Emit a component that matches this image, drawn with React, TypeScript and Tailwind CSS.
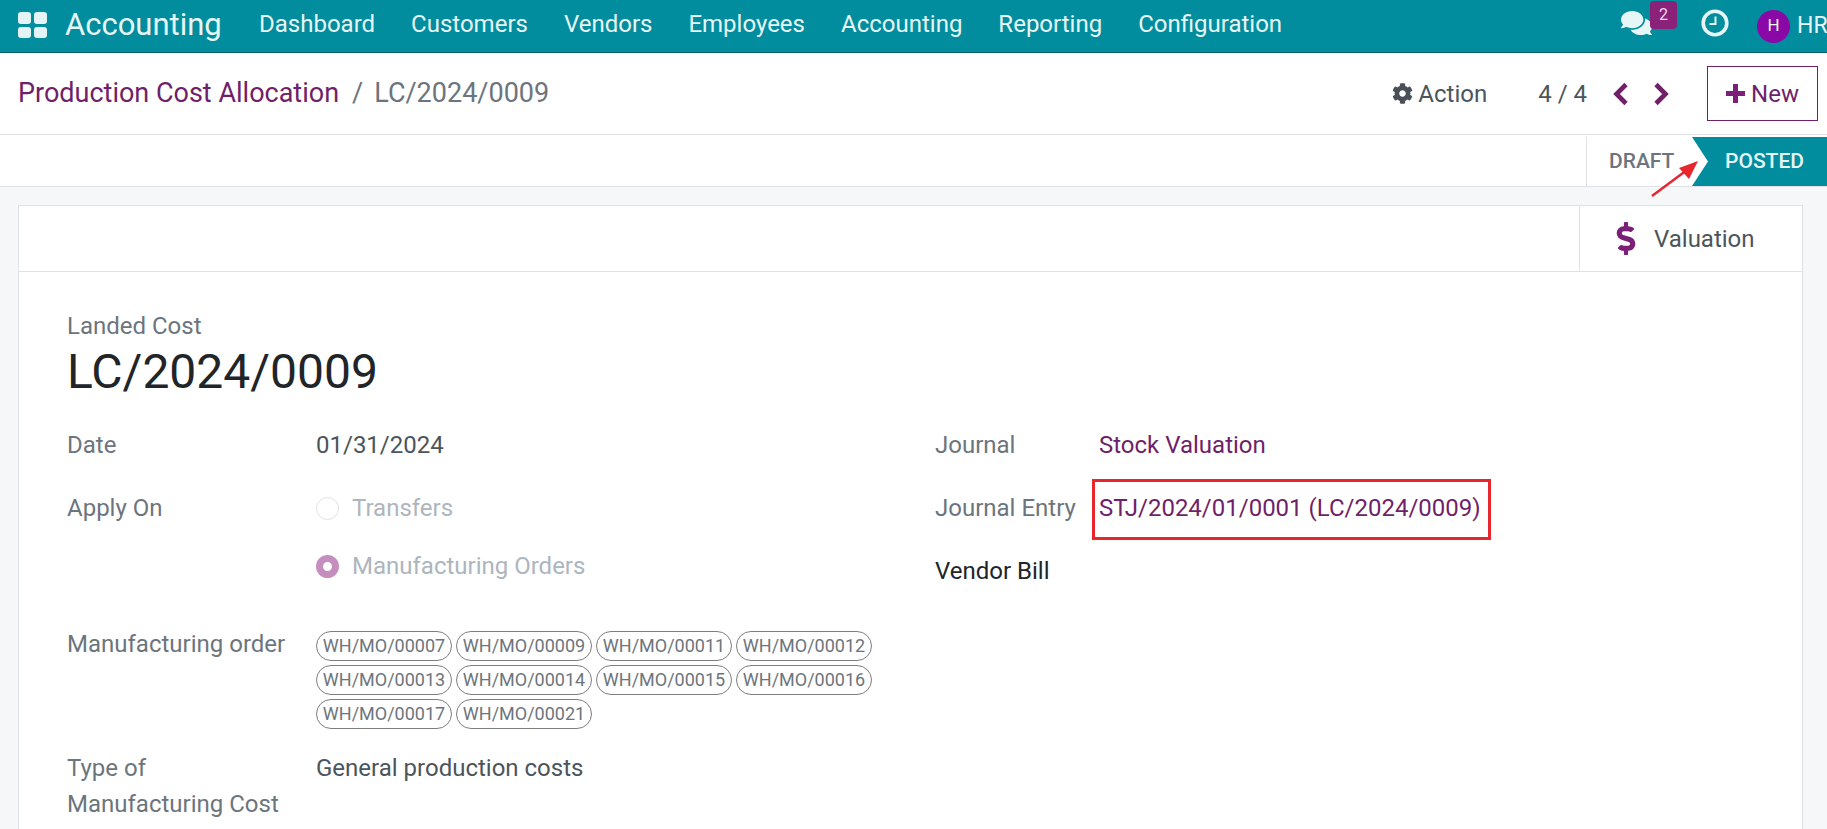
import { FaCog, FaDollarSign, FaComments } from "react-icons/fa";

const nav = ["Dashboard", "Customers", "Vendors", "Employees", "Accounting", "Reporting", "Configuration"];
const chips = [
  "WH/MO/00007", "WH/MO/00009", "WH/MO/00011", "WH/MO/00012",
  "WH/MO/00013", "WH/MO/00014", "WH/MO/00015", "WH/MO/00016",
  "WH/MO/00017", "WH/MO/00021",
];

export default function App() {
  return (
    <div className="relative w-[1827px] h-[829px] overflow-hidden bg-[#f6f7f9] font-['Roboto',sans-serif] text-[24px] text-[#4c555b]">
      {/* Top bar */}
      <header className="h-[53px] bg-[#018d9d] border-b border-[#0b5f69] flex items-center text-[#e6f5f6]">
        <div className="ml-[18px] mb-[2px] grid grid-cols-2 gap-[3px] w-[29px] h-[26px]">
          <span className="bg-[#e4f3f5] rounded-[3px]" />
          <span className="bg-[#e4f3f5] rounded-[3px]" />
          <span className="bg-[#e4f3f5] rounded-[3px]" />
          <span className="bg-[#e4f3f5] rounded-[3px]" />
        </div>
        <div className="ml-[18px] mb-[4px] w-[157px] text-[31px] leading-none">Accounting</div>
        <nav className="ml-[37px] mb-[5px] flex gap-[36px] text-[24px] leading-none">
          {nav.map((n) => (
            <span key={n}>{n}</span>
          ))}
        </nav>
        <div className="ml-auto flex items-center">
          <div className="relative w-[56px] h-[52px]">
            <FaComments className="absolute left-0 top-[8px] w-[31px] h-[30px]" />
            <span className="absolute left-[29px] top-[1px] w-[27px] h-[28px] rounded-[4px] bg-[#8a2279] text-[#f0d9ec] text-[16px] flex items-center justify-center">2</span>
          </div>
          <svg className="ml-[24px] mb-[6px] w-[28px] h-[28px]" viewBox="0 0 28 28" fill="none" stroke="currentColor">
            <circle cx="14" cy="14" r="11.8" strokeWidth="3.6" />
            <path d="M14.5 7.5V15H8.5" strokeWidth="2" />
          </svg>
          <span className="ml-[28px] w-[33px] h-[33px] rounded-full bg-[#8a08a6] text-[17px] flex items-center justify-center">H</span>
          <span className="ml-[7px] w-[30px] whitespace-nowrap text-[23px]">HR</span>
        </div>
      </header>

      {/* Control panel */}
      <div className="h-[82px] bg-white border-b border-[#dee2e6] flex items-center pl-[18px] pr-[9px]">
        <span className="text-[#701f69] text-[27px]">Production Cost Allocation</span>
        <span className="ml-[13px] text-[27px] text-[#6c757d]">/</span>
        <span className="ml-[11px] text-[27px] text-[#6c757d]">LC/2024/0009</span>
        <div className="ml-auto flex items-center">
          <FaCog className="w-[21px] h-[21px] text-[#495057]" />
          <span className="ml-[5px] mt-[1px] text-[24px]">Action</span>
          <span className="ml-[51px] mt-[1px] text-[24px]">4 / 4</span>
          <svg className="ml-[25px] w-[17px] h-[24px] text-[#701f69]" viewBox="0 0 17 24" fill="none" stroke="currentColor">
            <path d="M14 2.500 4.500 12l9.500 9.500" strokeWidth="4.600" />
          </svg>
          <svg className="ml-[24px] w-[17px] h-[24px] text-[#701f69]" viewBox="0 0 17 24" fill="none" stroke="currentColor">
            <path d="M3 2.500 12.500 12 3 21.500" strokeWidth="4.600" />
          </svg>
          <button className="ml-[37px] w-[111px] h-[55px] border border-[#701f69] flex items-center justify-center text-[#701f69] text-[24px]">
            <svg className="w-[19px] h-[19px] mr-[6px] text-[#7c1f78]" viewBox="0 0 19 19" fill="currentColor">
              <path d="M7 0h5v7h7v5h-7v7H7v-7H0V7h7z" />
            </svg>
            New
          </button>
        </div>
      </div>

      {/* Status bar */}
      <div className="h-[52px] bg-white border-b border-[#dee2e6] flex justify-end">
        <div className="flex mt-[2px] h-[49px]">
          <div className="w-[106px] border-l border-[#dee2e6] pl-[22px] flex items-center font-medium text-[21px] text-[#6c757d]">DRAFT</div>
          <div className="w-[135px] relative flex items-center justify-end pr-[23px] font-medium text-[21px] text-[#e6f5f6]">
            <svg className="absolute inset-0 w-full h-full" viewBox="0 0 135 49" preserveAspectRatio="none">
              <polygon points="0,0 135,0 135,49 0,49 16,24.5" fill="#018d9d" />
            </svg>
            <span className="relative">POSTED</span>
          </div>
        </div>
      </div>

      {/* Sheet */}
      <div className="mt-[18px] ml-[18px] mr-[24px] h-[700px] bg-white border border-[#dee2e6]">
        <div className="h-[66px] border-b border-[#dee2e6] flex justify-end">
          <div className="w-[223px] border-l border-[#dee2e6] flex items-center pl-[36px]">
            <FaDollarSign className="w-[20px] h-[33px] text-[#7c1f78]" />
            <span className="ml-[18px] mt-[1px] text-[24px]">Valuation</span>
          </div>
        </div>
        <div className="pl-[48px] pt-[38px]">
          <div className="text-[#6c757d] text-[24px] leading-[32px]">Landed Cost</div>
          <div className="text-[#212529] text-[48px] leading-[60px]">LC/2024/0009</div>
          <div className="flex mt-[26px]">
            <div className="w-[868px]">
              <div className="flex h-[63px] items-start">
                <span className="w-[249px] leading-[34px] text-[#6c757d]">Date</span>
                <span className="leading-[34px]">01/31/2024</span>
              </div>
              <div className="flex h-[58px] items-start">
                <span className="w-[249px] leading-[34px] text-[#6c757d]">Apply On</span>
                <span className="flex items-center h-[34px] text-[#adb5bd]">
                  <span className="w-[23px] h-[23px] rounded-full border border-[#dee2e6] mr-[13px]" />
                  Transfers
                </span>
              </div>
              <div className="flex h-[77px] items-start">
                <span className="w-[249px]" />
                <span className="flex items-center h-[34px] text-[#adb5bd]">
                  <span className="w-[23px] h-[23px] rounded-full border-[7px] border-[#c48fbf] mr-[13px]" />
                  Manufacturing Orders
                </span>
              </div>
              <div className="flex h-[124px] items-start">
                <span className="w-[249px] leading-[36px] text-[#6c757d]">Manufacturing order</span>
                <div className="w-[560px] flex flex-wrap gap-y-[4px]">
                  {chips.map((c) => (
                    <span key={c} className="w-[140px] h-[30px] pr-[4px]">
                      <span className="inline-flex h-[30px] w-[136px] items-center justify-center rounded-full border border-[#7d7d7d] text-[#6c757d] text-[18px]">{c}</span>
                    </span>
                  ))}
                </div>
              </div>
              <div className="flex items-start">
                <span className="w-[249px] leading-[36px] text-[#6c757d]">Type of<br />Manufacturing Cost</span>
                <span className="leading-[36px]">General production costs</span>
              </div>
            </div>
            <div>
              <div className="flex h-[63px] items-start">
                <span className="w-[164px] leading-[34px] text-[#6c757d]">Journal</span>
                <span className="leading-[34px] text-[#701f69]">Stock Valuation</span>
              </div>
              <div className="flex h-[63px] items-start">
                <span className="w-[164px] leading-[34px] text-[#6c757d]">Journal Entry</span>
                <span className="leading-[34px] text-[#701f69]">STJ/2024/01/0001 (LC/2024/0009)</span>
              </div>
              <div className="leading-[34px] text-[#212529]">Vendor Bill</div>
            </div>
          </div>
        </div>
      </div>

      {/* Annotations */}
      <div className="absolute left-[1092px] top-[479px] w-[399px] h-[61px] border-[3px] border-[#e8262d]" />
      <svg className="absolute left-[1645px] top-[155px] w-[60px] h-[50px]" viewBox="0 0 60 50">
        <line x1="7" y1="41" x2="46" y2="12" stroke="#e8262d" strokeWidth="2.5" />
        <polygon points="53,6 34,13 44,24" fill="#e8262d" />
      </svg>
    </div>
  );
}
